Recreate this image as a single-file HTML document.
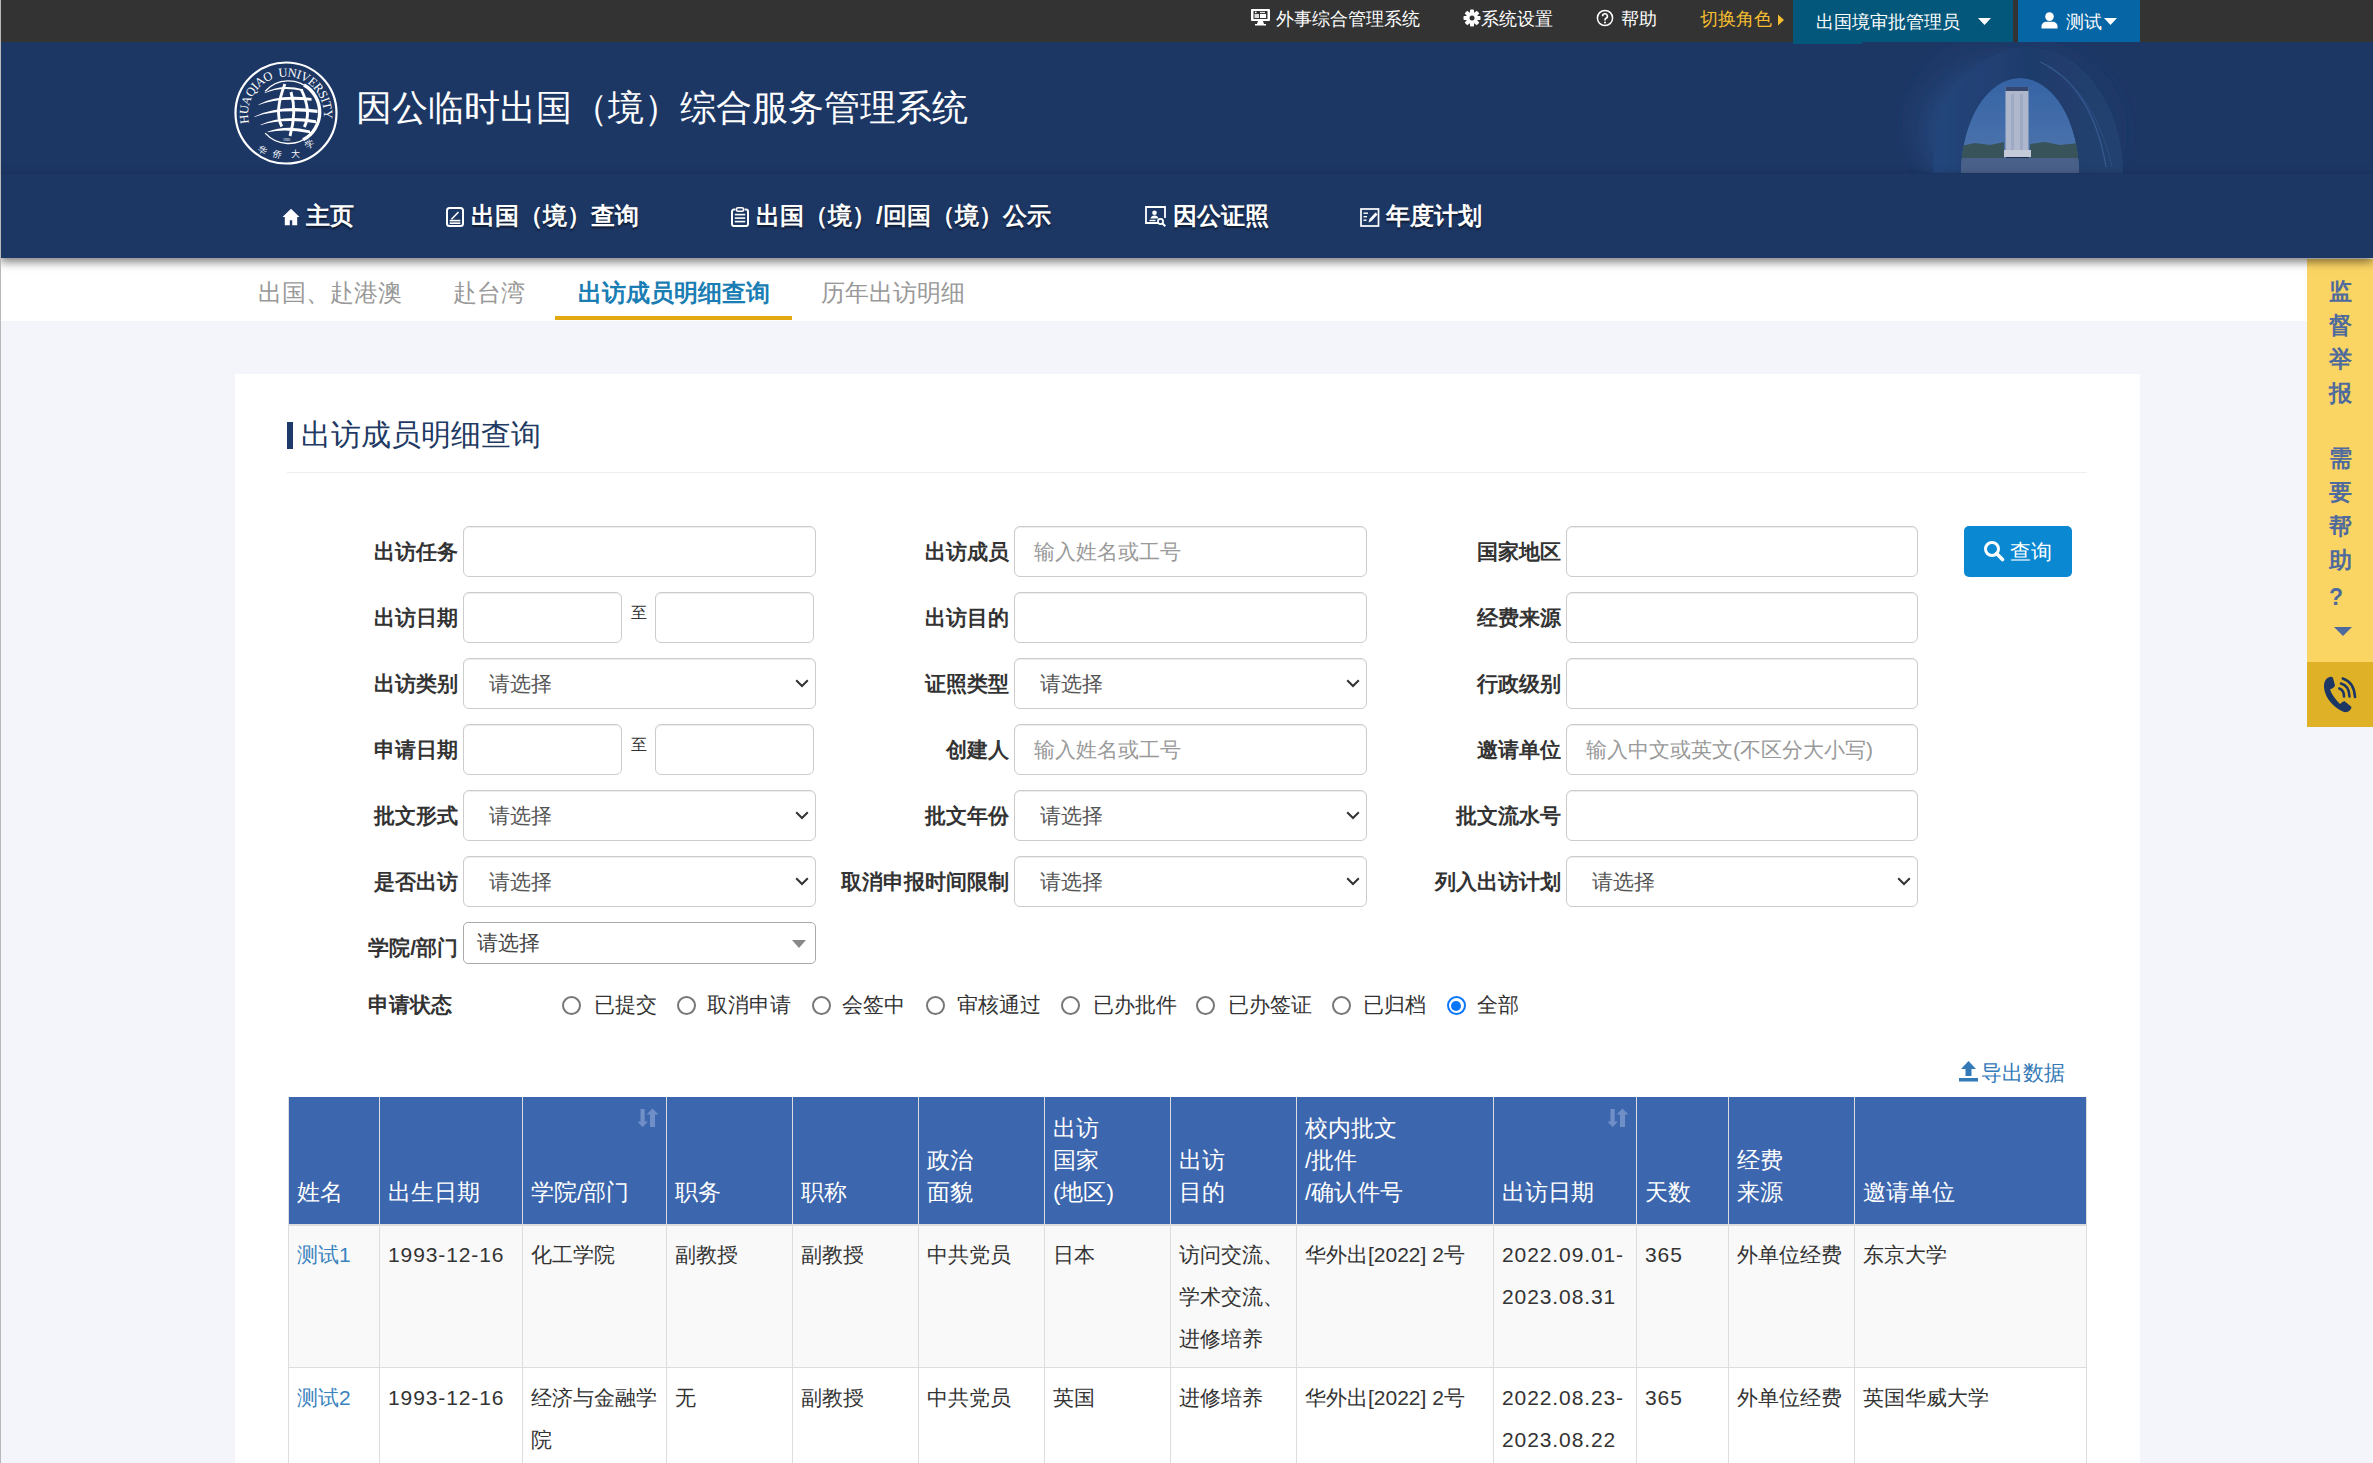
<!DOCTYPE html><html><head><meta charset="utf-8"><title>出访成员明细查询</title><style>
*{box-sizing:border-box;margin:0;padding:0}
html,body{width:2373px;height:1463px;overflow:hidden}
body{position:relative;background:#f4f5fa;font-family:"Liberation Sans",sans-serif;color:#333;font-size:21px}
.a{position:absolute;white-space:nowrap}
#leftline{position:absolute;left:0;top:0;width:1px;height:1463px;background:#b8b8b8;z-index:50}
#topbar{position:absolute;left:0;top:0;width:2373px;height:42px;background:#333}
.tt{position:absolute;top:0;height:38px;line-height:38px;font-size:18px;color:#fff;white-space:nowrap}
#header{position:absolute;left:0;top:42px;width:2373px;height:131px;background:#1d3765;overflow:hidden}
#nav{position:absolute;left:0;top:173px;width:2373px;height:85px;background:#1d3765;box-shadow:0 4px 9px rgba(0,0,0,.5);z-index:5;border-top:1px solid #1a3360}
.n{position:absolute;top:0;height:84px;line-height:84px;font-size:24px;font-weight:bold;color:#fff;text-shadow:0 2px 2px rgba(0,0,0,.55);white-space:nowrap}
.n svg{position:absolute}
#subtabs{position:absolute;left:0;top:258px;width:2373px;height:63px;background:#fff}
.s{position:absolute;top:0;height:63px;line-height:70px;font-size:24px;color:#999;white-space:nowrap}
#panel{position:absolute;left:235px;top:374px;width:1905px;height:1100px;background:#fff}
.lb{position:absolute;font-weight:bold;font-size:21px;line-height:51px;height:51px;text-align:right;white-space:nowrap;color:#333}
.in{position:absolute;height:51px;border:1px solid #ccc;border-radius:6px;background:#fff;box-shadow:inset 0 1px 1px rgba(0,0,0,.075)}
.ph{position:absolute;font-size:21px;line-height:51px;color:#999;white-space:nowrap}
.sv{position:absolute;font-size:21px;line-height:51px;color:#555;white-space:nowrap}
.chev{position:absolute}
.rd{position:absolute;width:19px;height:19px;border:2px solid #777;border-radius:50%;background:#fff}
.rt{position:absolute;font-size:21px;line-height:30px;color:#333;white-space:nowrap}
#tbl{position:absolute;left:288px;top:1097px;border-collapse:collapse;table-layout:fixed}
#tbl th{background:#3c66ad;color:#fff;font-weight:normal;text-align:left;vertical-align:bottom;font-size:22.5px;line-height:32px;padding:0 8px 15px 8px;border-left:1px solid #dcdcdc;border-right:1px solid #dcdcdc;height:127px}
#tbl td{vertical-align:top;font-size:21px;line-height:42px;padding:9px 8px 0 8px;border:1px solid #ddd;color:#333}
#tbl tr.r1 td{background:#f9f9f9;height:143px}
#tbl tr.r2 td{background:#fff;height:200px}
#tbl .dg{letter-spacing:0.9px}
#tbl a{color:#3b83c0;text-decoration:none}
#sidebar{position:absolute;left:2307px;top:259px;width:66px;height:468px;z-index:4;background:#fbd564}
.sc{position:absolute;left:0;width:66px;text-align:center;font-size:23px;font-weight:bold;color:#4f6a9c;line-height:34px}
</style></head><body>
<div id="leftline"></div>
<div id="topbar">
<svg class="a" style="left:1250px;top:8px" width="21" height="18" viewBox="0 0 21 18"><rect x="1" y="1" width="19" height="12" rx="1" fill="#fff"/><rect x="3.5" y="3" width="14" height="8" fill="#333"/><rect x="4.5" y="6" width="4.5" height="4" fill="#ddd"/><rect x="10" y="6" width="6" height="4" fill="#fff"/><rect x="10" y="3.8" width="5" height="1.3" fill="#ddd"/><rect x="5" y="3.6" width="1.5" height="1.5" fill="#fff"/><path d="M8 13h5l1 3h2v1.5H5V16h2z" fill="#fff"/></svg>
<div class="tt" style="left:1276px">外事综合管理系统</div>
<svg class="a" style="left:1463px;top:9px" width="18" height="18" viewBox="0 0 18 18"><g fill="#fff" transform="translate(9 9)"><rect x="-2" y="-8.5" width="4" height="5" rx="0.8" transform="rotate(0)"/><rect x="-2" y="-8.5" width="4" height="5" rx="0.8" transform="rotate(45)"/><rect x="-2" y="-8.5" width="4" height="5" rx="0.8" transform="rotate(90)"/><rect x="-2" y="-8.5" width="4" height="5" rx="0.8" transform="rotate(135)"/><rect x="-2" y="-8.5" width="4" height="5" rx="0.8" transform="rotate(180)"/><rect x="-2" y="-8.5" width="4" height="5" rx="0.8" transform="rotate(225)"/><rect x="-2" y="-8.5" width="4" height="5" rx="0.8" transform="rotate(270)"/><rect x="-2" y="-8.5" width="4" height="5" rx="0.8" transform="rotate(315)"/><circle r="6"/></g><circle cx="9" cy="9" r="2.5" fill="#333"/></svg>
<div class="tt" style="left:1481px">系统设置</div>
<svg class="a" style="left:1596px;top:9px" width="18" height="18" viewBox="0 0 18 18"><circle cx="9" cy="9" r="7.6" fill="none" stroke="#fff" stroke-width="1.5"/><path d="M6.6 7.2a2.4 2.4 0 1 1 3.4 2.1c-.7.4-1 .8-1 1.6v.6" fill="none" stroke="#fff" stroke-width="1.6"/><circle cx="9" cy="13.4" r="1" fill="#fff"/></svg>
<div class="tt" style="left:1621px">帮助</div>
<div class="tt" style="left:1700px;color:#f6be30">切换角色</div>
<svg class="a" style="left:1777px;top:14px" width="8" height="12" viewBox="0 0 8 12"><path d="M1 0.5L7 6L1 11.5z" fill="#f6be30"/></svg>
<div class="a" style="left:1793px;top:0;width:220px;height:42px;background:#03577a"></div>
<div class="tt" style="left:1816px;top:2px;height:40px;line-height:40px">出国境审批管理员</div>
<svg class="a" style="left:1978px;top:18px" width="13" height="7" viewBox="0 0 13 7"><path d="M0 0h13L6.5 7z" fill="#fff"/></svg>
<div class="a" style="left:2018px;top:0;width:122px;height:42px;background:#0565a5"></div>
<svg class="a" style="left:2041px;top:12px" width="17" height="17" viewBox="0 0 17 17"><circle cx="8.5" cy="4.6" r="4.3" fill="#fff"/><path d="M0.5 16.5v-2.2c0-2.8 2.4-4.6 5-4.6h6c2.6 0 5 1.8 5 4.6v2.2z" fill="#fff"/></svg>
<div class="tt" style="left:2066px;top:2px;height:40px;line-height:40px">测试</div>
<svg class="a" style="left:2104px;top:18px" width="13" height="7" viewBox="0 0 13 7"><path d="M0 0h13L6.5 7z" fill="#fff"/></svg>
</div>
<div id="header">
<svg class="a" style="left:226px;top:10px" width="120" height="120" viewBox="0 0 120 120">
<defs><path id="tp" d="M23.2 72 A38 38 0 1 1 96.8 72"/><clipPath id="gc"><circle cx="62.4" cy="60.2" r="31"/></clipPath></defs>
<circle cx="60" cy="61" r="50.5" fill="none" stroke="#fff" stroke-width="2.2"/>
<text font-family="Liberation Serif" font-size="12.5" fill="#fff"><textPath href="#tp" startOffset="1" textLength="132" lengthAdjust="spacing">HUAQIAO&#160;&#160;UNIVERSITY</textPath></text>
<path d="M39.14 39.26 A31.3 31.3 0 1 1 39.14 81.14" fill="none" stroke="#fff" stroke-width="1.3"/><path d="M78.05 33.09 A31.3 31.3 0 0 1 77.09 87.84" fill="none" stroke="#fff" stroke-width="3.4"/>
<path d="M38.5 40.8 Q55 31.5 77 37.2 L77 39.0 Q55 33.93 38.5 41.199999999999996z" fill="#fff"/><path d="M32.5 52.5 Q52 41.5 85.5 46 L85.5 48.8 Q52 45.28 32.5 52.9z" fill="#fff"/><path d="M28.5 64.5 Q54 52 91.5 57.8 L91.5 61.0 Q54 56.32 28.5 64.9z" fill="#fff"/><path d="M34.5 72.8 Q57 62 90 68.2 L90 71.2 Q57 66.05 34.5 73.2z" fill="#fff"/><path d="M41.5 79.8 Q60 72.5 84 78.5 L84 81.3 Q60 76.28 41.5 80.2z" fill="#fff"/>
<g fill="none" stroke="#fff" stroke-width="2.9" clip-path="url(#gc)">
<path d="M58.9 32 Q48 60 55.8 74.5"/>
<path d="M65 40 Q71 60 64 84"/>
<path d="M75.3 37.5 Q86 60 78.3 75"/>
</g>
<text x="60.5" y="88.5" font-size="3.6" fill="#fff" font-family="Liberation Serif" text-anchor="middle">1960</text>
<g fill="#fff" font-size="9" font-family="Liberation Serif">
<text x="31" y="98" transform="rotate(35 31 98)">华</text><text x="46" y="104" transform="rotate(15 46 104)">侨</text><text x="65" y="105">大</text><text x="81" y="97" transform="rotate(-30 81 97)">学</text></g>
</svg>
<div class="a" style="left:356px;top:40px;font-size:36px;line-height:52px;color:#fff">因公临时出国（境）综合服务管理系统</div>
<svg class="a" style="left:1880px;top:0" width="280" height="131" viewBox="0 0 280 131">
<defs>
<radialGradient id="glow" cx="0.45" cy="0.55" r="0.55"><stop offset="0" stop-color="#2a5290"/><stop offset="0.55" stop-color="#24467c"/><stop offset="1" stop-color="#1d3765" stop-opacity="0"/></radialGradient>
<linearGradient id="sky" x1="0" y1="0" x2="0" y2="1"><stop offset="0" stop-color="#3563a4"/><stop offset="0.55" stop-color="#5379b0"/><stop offset="1" stop-color="#6683b0"/></linearGradient>
<linearGradient id="ring" x1="0" y1="0" x2="1" y2="0"><stop offset="0" stop-color="#22467c"/><stop offset="0.5" stop-color="#1f3c6c"/><stop offset="1" stop-color="#22416f"/></linearGradient>
<filter id="bl"><feGaussianBlur stdDeviation="0.7"/></filter>
<filter id="bl2"><feGaussianBlur stdDeviation="6"/></filter>
</defs>
<ellipse cx="140" cy="80" rx="115" ry="95" fill="url(#glow)" filter="url(#bl2)"/>
<g filter="url(#bl)">
<ellipse cx="148" cy="131" rx="95" ry="126" fill="url(#ring)"/>
<path d="M160 20 C195 35 218 75 226 125" fill="none" stroke="#3a5f96" stroke-width="1.3" opacity="0.8"/>
<path d="M168 25 C200 42 222 80 232 125" fill="none" stroke="#33568c" stroke-width="1" opacity="0.7"/>
<clipPath id="op"><ellipse cx="140" cy="131" rx="59" ry="95"/></clipPath>
<g clip-path="url(#op)">
<ellipse cx="140" cy="131" rx="59" ry="95" fill="url(#sky)"/>
<rect x="125.5" y="45" width="23" height="68" fill="#aeb7cc"/>
<rect x="125.5" y="45" width="23" height="4" fill="#34466e"/>
<rect x="131" y="52" width="3" height="58" fill="#9eaac4"/>
<rect x="140" y="52" width="3" height="58" fill="#9eaac4"/>
<path d="M81 104 L95 101 L110 103 L124 100 L124 116 L81 116z" fill="#38535a"/>
<path d="M150 102 L165 100 L180 103 L199 101 L199 116 L150 116z" fill="#38535a"/>
<rect x="124" y="108" width="27" height="7" fill="#c5cad8"/>
<rect x="126" y="115" width="23" height="8" fill="#1f2c4e"/>
<rect x="81" y="116" width="118" height="15" fill="#4a6089"/>
</g>
</g>
</svg>
</div>
<div class="a" style="left:1793px;top:42px;width:69px;height:2px;background:#03577a;z-index:3"></div>
<div id="nav">
<div class="n" style="left:306px"><svg style="left:-24px;top:34px" width="18" height="18" viewBox="0 0 18 18"><path d="M9 0.8L0.5 9h2.3v8.2h5v-5h2.4v5h5V9h2.3z" fill="#fff"/></svg>主页</div>
<div class="n" style="left:471px"><svg style="left:-25px;top:33px" width="18" height="20" viewBox="0 0 18 20"><rect x="1" y="1" width="16" height="18" rx="2.5" fill="none" stroke="#fff" stroke-width="2"/><path d="M5.5 12.3L12.5 5" stroke="#fff" stroke-width="1.6"/><rect x="3.7" y="12.8" width="10.6" height="1.6" fill="#fff"/><rect x="3.7" y="15.4" width="10.6" height="1.6" fill="#fff"/></svg>出国（境）查询</div>
<div class="n" style="left:756px"><svg style="left:-25px;top:33px" width="18" height="20" viewBox="0 0 18 20"><path d="M4.5 2.5H3a2 2 0 0 0-2 2V17a2 2 0 0 0 2 2h12a2 2 0 0 0 2-2V4.5a2 2 0 0 0-2-2h-1.5" fill="none" stroke="#fff" stroke-width="2"/><rect x="5.5" y="0.8" width="7" height="3.4" rx="1.5" fill="none" stroke="#fff" stroke-width="1.6"/><rect x="3.8" y="6.8" width="10.4" height="1.6" fill="#fff"/><rect x="3.8" y="10.3" width="10.4" height="1.6" fill="#fff"/><rect x="3.8" y="13.8" width="10.4" height="1.6" fill="#fff"/></svg>出国（境）/回国（境）公示</div>
<div class="n" style="left:1173px"><svg style="left:-28px;top:32px" width="22" height="22" viewBox="0 0 22 22"><path d="M14 17H1V1h19v11" fill="none" stroke="#fff" stroke-width="1.8"/><circle cx="9.5" cy="6.8" r="2.3" fill="#fff"/><path d="M5.5 12.5c.5-2 2-3 4-3s3.5 1 4 3z" fill="#fff"/><rect x="4.5" y="13.8" width="6" height="1.4" fill="#fff"/><circle cx="15.5" cy="15.5" r="2.6" fill="none" stroke="#fff" stroke-width="1.7"/><path d="M17.3 17.3l3 3" stroke="#fff" stroke-width="2"/></svg>因公证照</div>
<div class="n" style="left:1386px"><svg style="left:-26px;top:34px" width="20" height="19" viewBox="0 0 20 19"><rect x="1" y="1" width="17.5" height="17" fill="none" stroke="#fff" stroke-width="1.7"/><rect x="3.5" y="4.5" width="4.5" height="1.4" fill="#fff"/><rect x="3.5" y="8" width="3.5" height="1.4" fill="#fff"/><rect x="3.5" y="11.5" width="3" height="1.4" fill="#fff"/><path d="M8.5 14.5l1-3.5 6-6.5 2 2-6 6.5z" fill="#fff"/></svg>年度计划</div>
</div>
<div id="subtabs">
<div class="s" style="left:258px">出国、赴港澳</div>
<div class="s" style="left:453px">赴台湾</div>
<div class="s" style="left:578px;color:#1a7db3;font-weight:bold">出访成员明细查询</div>
<div class="a" style="left:555px;top:58px;width:237px;height:4px;background:#e3a812"></div>
<div class="s" style="left:821px">历年出访明细</div>
</div>
<div id="panel"></div>
<div class="a" style="left:287px;top:422px;width:6px;height:27px;background:#1e3a6a"></div>
<div class="a" style="left:301px;top:414px;font-size:30px;line-height:42px;color:#1f3a64">出访成员明细查询</div>
<div class="a" style="left:287px;top:472px;width:1800px;height:1px;background:#eee"></div>
<div class="lb" style="left:158px;width:300px;top:526px">出访任务</div>
<div class="in" style="left:463px;top:526px;width:353px"></div>
<div class="lb" style="left:709px;width:300px;top:526px">出访成员</div>
<div class="in" style="left:1014px;top:526px;width:353px"></div>
<div class="ph" style="left:1034px;top:526px">输入姓名或工号</div>
<div class="lb" style="left:1261px;width:300px;top:526px">国家地区</div>
<div class="in" style="left:1566px;top:526px;width:352px"></div>
<div class="lb" style="left:158px;width:300px;top:592px">出访日期</div>
<div class="in" style="left:463px;top:592px;width:159px"></div>
<div class="a" style="left:631px;top:600px;font-size:16px;line-height:26px;color:#333">至</div>
<div class="in" style="left:655px;top:592px;width:159px"></div>
<div class="lb" style="left:709px;width:300px;top:592px">出访目的</div>
<div class="in" style="left:1014px;top:592px;width:353px"></div>
<div class="lb" style="left:1261px;width:300px;top:592px">经费来源</div>
<div class="in" style="left:1566px;top:592px;width:352px"></div>
<div class="lb" style="left:158px;width:300px;top:658px">出访类别</div>
<div class="in" style="left:463px;top:658px;width:353px"></div>
<div class="sv" style="left:489px;top:658px">请选择</div>
<svg class="chev" style="left:795px;top:679px" width="14" height="9" viewBox="0 0 14 9"><path d="M1.2 1.2L7 7L12.8 1.2" fill="none" stroke="#333" stroke-width="2"/></svg>
<div class="lb" style="left:709px;width:300px;top:658px">证照类型</div>
<div class="in" style="left:1014px;top:658px;width:353px"></div>
<div class="sv" style="left:1040px;top:658px">请选择</div>
<svg class="chev" style="left:1346px;top:679px" width="14" height="9" viewBox="0 0 14 9"><path d="M1.2 1.2L7 7L12.8 1.2" fill="none" stroke="#333" stroke-width="2"/></svg>
<div class="lb" style="left:1261px;width:300px;top:658px">行政级别</div>
<div class="in" style="left:1566px;top:658px;width:352px"></div>
<div class="lb" style="left:158px;width:300px;top:724px">申请日期</div>
<div class="in" style="left:463px;top:724px;width:159px"></div>
<div class="a" style="left:631px;top:732px;font-size:16px;line-height:26px;color:#333">至</div>
<div class="in" style="left:655px;top:724px;width:159px"></div>
<div class="lb" style="left:709px;width:300px;top:724px">创建人</div>
<div class="in" style="left:1014px;top:724px;width:353px"></div>
<div class="ph" style="left:1034px;top:724px">输入姓名或工号</div>
<div class="lb" style="left:1261px;width:300px;top:724px">邀请单位</div>
<div class="in" style="left:1566px;top:724px;width:352px"></div>
<div class="ph" style="left:1586px;top:724px">输入中文或英文(不区分大小写)</div>
<div class="lb" style="left:158px;width:300px;top:790px">批文形式</div>
<div class="in" style="left:463px;top:790px;width:353px"></div>
<div class="sv" style="left:489px;top:790px">请选择</div>
<svg class="chev" style="left:795px;top:811px" width="14" height="9" viewBox="0 0 14 9"><path d="M1.2 1.2L7 7L12.8 1.2" fill="none" stroke="#333" stroke-width="2"/></svg>
<div class="lb" style="left:709px;width:300px;top:790px">批文年份</div>
<div class="in" style="left:1014px;top:790px;width:353px"></div>
<div class="sv" style="left:1040px;top:790px">请选择</div>
<svg class="chev" style="left:1346px;top:811px" width="14" height="9" viewBox="0 0 14 9"><path d="M1.2 1.2L7 7L12.8 1.2" fill="none" stroke="#333" stroke-width="2"/></svg>
<div class="lb" style="left:1261px;width:300px;top:790px">批文流水号</div>
<div class="in" style="left:1566px;top:790px;width:352px"></div>
<div class="lb" style="left:158px;width:300px;top:856px">是否出访</div>
<div class="in" style="left:463px;top:856px;width:353px"></div>
<div class="sv" style="left:489px;top:856px">请选择</div>
<svg class="chev" style="left:795px;top:877px" width="14" height="9" viewBox="0 0 14 9"><path d="M1.2 1.2L7 7L12.8 1.2" fill="none" stroke="#333" stroke-width="2"/></svg>
<div class="lb" style="left:709px;width:300px;top:856px">取消申报时间限制</div>
<div class="in" style="left:1014px;top:856px;width:353px"></div>
<div class="sv" style="left:1040px;top:856px">请选择</div>
<svg class="chev" style="left:1346px;top:877px" width="14" height="9" viewBox="0 0 14 9"><path d="M1.2 1.2L7 7L12.8 1.2" fill="none" stroke="#333" stroke-width="2"/></svg>
<div class="lb" style="left:1261px;width:300px;top:856px">列入出访计划</div>
<div class="in" style="left:1566px;top:856px;width:352px"></div>
<div class="sv" style="left:1592px;top:856px">请选择</div>
<svg class="chev" style="left:1897px;top:877px" width="14" height="9" viewBox="0 0 14 9"><path d="M1.2 1.2L7 7L12.8 1.2" fill="none" stroke="#333" stroke-width="2"/></svg>
<div class="a" style="left:1964px;top:526px;width:108px;height:51px;background:#0a88d2;border-radius:5px"></div>
<svg class="a" style="left:1983px;top:540px" width="22" height="22" viewBox="0 0 22 22"><circle cx="9" cy="9" r="6.5" fill="none" stroke="#fff" stroke-width="3"/><path d="M13.5 13.5L19.5 19.5" stroke="#fff" stroke-width="3.6" stroke-linecap="round"/></svg>
<div class="a" style="left:2010px;top:526px;font-size:21px;line-height:51px;color:#fff">查询</div>
<div class="lb" style="left:158px;width:300px;top:922px;line-height:51px">学院/部门</div>
<div class="in" style="left:463px;top:922px;width:353px;height:42px;border-color:#aaa;border-radius:5px;box-shadow:none"></div>
<div class="sv" style="left:477px;top:922px;line-height:42px;color:#444">请选择</div>
<svg class="a" style="left:792px;top:940px" width="14" height="8" viewBox="0 0 14 8"><path d="M0 0h14L7 8z" fill="#888"/></svg>
<div class="a" style="left:368px;top:990px;font-size:21px;font-weight:bold;line-height:30px">申请状态</div>
<div class="rd" style="left:561.5px;top:996px"></div>
<div class="rt" style="left:594px;top:990px">已提交</div>
<div class="rd" style="left:676.5px;top:996px"></div>
<div class="rt" style="left:707px;top:990px">取消申请</div>
<div class="rd" style="left:811.5px;top:996px"></div>
<div class="rt" style="left:842px;top:990px">会签中</div>
<div class="rd" style="left:925.5px;top:996px"></div>
<div class="rt" style="left:957px;top:990px">审核通过</div>
<div class="rd" style="left:1060.5px;top:996px"></div>
<div class="rt" style="left:1093px;top:990px">已办批件</div>
<div class="rd" style="left:1195.5px;top:996px"></div>
<div class="rt" style="left:1228px;top:990px">已办签证</div>
<div class="rd" style="left:1331.5px;top:996px"></div>
<div class="rt" style="left:1363px;top:990px">已归档</div>
<div class="rd" style="left:1446.5px;top:996px;border:2px solid #0a76fa"></div><div class="a" style="left:1451px;top:1000.5px;width:10px;height:10px;border-radius:50%;background:#0a76fa"></div>
<div class="rt" style="left:1477px;top:990px">全部</div>
<svg class="a" style="left:1958px;top:1060px" width="21" height="22" viewBox="0 0 21 22"><path d="M10.5 1L3 9h4.5v7h6V9H18z" fill="#337ab7"/><rect x="1" y="18" width="19" height="3.5" fill="#337ab7"/></svg>
<div class="a" style="left:1981px;top:1058px;font-size:21px;line-height:30px;color:#337ab7">导出数据</div>
<table id="tbl"><colgroup><col style="width:91px"><col style="width:143px"><col style="width:144px"><col style="width:126px"><col style="width:126px"><col style="width:126px"><col style="width:126px"><col style="width:126px"><col style="width:197px"><col style="width:143px"><col style="width:92px"><col style="width:126px"><col style="width:232px"></colgroup>
<tr><th>姓名</th><th>出生日期</th><th>学院/部门</th><th>职务</th><th>职称</th><th>政治<br>面貌</th><th>出访<br>国家<br>(地区)</th><th>出访<br>目的</th><th>校内批文<br>/批件<br>/确认件号</th><th>出访日期</th><th>天数</th><th>经费<br>来源</th><th>邀请单位</th></tr>
<tr class="r1"><td><a>测试1</a></td><td><span class="dg">1993-12-16</span></td><td>化工学院</td><td>副教授</td><td>副教授</td><td>中共党员</td><td>日本</td><td>访问交流、<br>学术交流、<br>进修培养</td><td>华外出[2022] 2号</td><td><span class="dg">2022.09.01-<br>2023.08.31</span></td><td><span class="dg">365</span></td><td>外单位经费</td><td>东京大学</td></tr>
<tr class="r2"><td><a>测试2</a></td><td><span class="dg">1993-12-16</span></td><td>经济与金融学<br>院</td><td>无</td><td>副教授</td><td>中共党员</td><td>英国</td><td>进修培养</td><td>华外出[2022] 2号</td><td><span class="dg">2022.08.23-<br>2023.08.22</span></td><td><span class="dg">365</span></td><td>外单位经费</td><td>英国华威大学</td></tr>
</table>
<div class="a" style="left:288px;top:1224px;width:1798px;height:2px;background:#ddd"></div>
<svg class="a" style="left:638px;top:1108px" width="20" height="20" viewBox="0 0 20 20"><path d="M2.5 1h4.2v12.5h3.3L4.6 19.2L-0.8 13.5h3.3z" fill="#6f8fc6"/><path d="M12 19h5v-12.5h3.4L14.5 0.5L8.6 6.5H12z" fill="#6f8fc6"/></svg>
<svg class="a" style="left:1608px;top:1108px" width="20" height="20" viewBox="0 0 20 20"><path d="M2.5 1h4.2v12.5h3.3L4.6 19.2L-0.8 13.5h3.3z" fill="#6f8fc6"/><path d="M12 19h5v-12.5h3.4L14.5 0.5L8.6 6.5H12z" fill="#6f8fc6"/></svg>
<div id="sidebar">
<div class="sc" style="top:15px">监</div>
<div class="sc" style="top:49px">督</div>
<div class="sc" style="top:83px">举</div>
<div class="sc" style="top:117px">报</div>
<div class="sc" style="top:182px">需</div>
<div class="sc" style="top:216px">要</div>
<div class="sc" style="top:250px">帮</div>
<div class="sc" style="top:284px">助</div>
<div class="sc" style="top:321px;left:-4px">?</div>
<svg class="a" style="left:27px;top:368px" width="18" height="9" viewBox="0 0 18 9"><path d="M0 0h18L9 9z" fill="#4f6a9c"/></svg>
<div class="a" style="left:0;top:403px;width:66px;height:65px;background:#dfb126"></div>
<svg class="a" style="left:8px;top:409px" width="50" height="50" viewBox="0 0 50 50"><path d="M15.5 8.8C11 9.5 8.7 14 9 19C9.5 27 15 36 24 41.5C27 43.5 30 44.5 32 44C34.5 43.5 36.5 41 36.5 39L30 33.5C29 33 28 33.5 25 36C20 31 16.5 26 15 21.5C17 20.5 19.5 19.5 20 17.5L18 10C17.5 9 16.5 8.8 15.5 8.8z" fill="#1d3765"/><g fill="none" stroke="#1d3765" stroke-width="2.6" stroke-linecap="round"><path d="M24.3 20.5Q29 22 29 28.5"/><path d="M26 15.5Q34 17.5 34.5 28.5"/><path d="M27.8 10.5Q39 14 40 29"/></g></svg>
</div>
</body></html>
